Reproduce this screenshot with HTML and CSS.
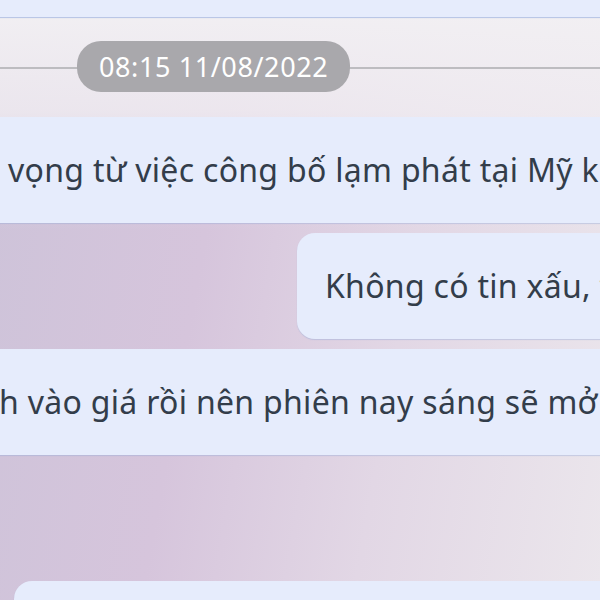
FILE: index.html
```html
<!DOCTYPE html>
<html lang="vi">
<head>
  <meta charset="UTF-8">
  <meta name="viewport" content="width=device-width, initial-scale=1.0">
  <title>Tin nhắn</title>
  <link rel="stylesheet" href="styles.css">
</head>
<body>
  <div class="chat">
    <div class="msg msg-in msg-first">
      <div class="bubble bubble-top"></div>
    </div>

    <div class="time-divider">
      <span class="time-pill">08:15 11/08/2022</span>
    </div>

    <div class="msg msg-in">
      <div class="bubble">vọng từ việc công bố lạm phát tại Mỹ khiến</div>
    </div>

    <div class="msg msg-out">
      <div class="bubble">Không có tin xấu, thị</div>
    </div>

    <div class="msg msg-in msg-cut">
      <div class="bubble">h vào giá rồi nên phiên nay sáng sẽ mở cửa</div>
    </div>

    <div class="msg msg-in msg-last">
      <div class="bubble bubble-next"></div>
    </div>
  </div>
</body>
</html>
```

FILE: styles.css
```css
html, body {
  margin: 0;
  padding: 0;
  height: 100%;
}
body {
  font-family: "Noto Sans", "Open Sans", sans-serif;
  overflow: hidden;
  background:
    linear-gradient(to bottom, #f2f0f3 0, rgba(240,236,241,0.85) 110px, rgba(240,236,241,0) 230px),
    linear-gradient(100deg, #cdc3d9 0%, #d6c5dc 35%, #e2d7e5 65%, #ebe6ec 100%);
}
.chat {
  display: flex;
  flex-direction: column;
}
.msg {
  display: flex;
  margin-bottom: 10px;
}
.bubble {
  flex-shrink: 0;
  background-color: #e6ecfc;
  color: #333d4a;
  font-size: 32px;
  letter-spacing: 0.3px;
  line-height: 42px;
  padding: 32px 28px;
  white-space: nowrap;
  border-radius: 18px;
  box-shadow: 0 1px 1px rgba(150, 170, 215, 0.45);
}
.msg-in .bubble {
  margin-left: -20px;
  width: 900px;
  padding-left: 28px;
}
.msg-cut .bubble {
  padding-left: 19px;
}
.msg-out .bubble {
  margin-left: 297px;
  width: 500px;
}
.msg-first {
  margin-bottom: 0;
}
.bubble-top {
  height: 17px;
  padding: 0;
  box-sizing: border-box;
  border-radius: 0 0 18px 18px;
  box-shadow: 0 1px 1px rgba(140, 165, 220, 0.6);
}
.time-divider {
  position: relative;
  display: flex;
  margin: 24px 0 25px;
}
.time-divider::before {
  content: "";
  position: absolute;
  left: 0;
  right: 0;
  top: 26px;
  border-top: 2px solid #bdbcc0;
}
.time-pill {
  position: relative;
  margin-left: 77px;
  height: 51px;
  line-height: 51px;
  padding: 0 22px;
  border-radius: 24px;
  background-color: #a9a8ac;
  color: #ffffff;
  font-size: 27px;
  letter-spacing: 0.6px;
}
.msg-last {
  margin-top: 116px;
}
.msg-last .bubble-next {
  margin-left: 14px;
  height: 40px;
  padding: 0;
}
```
